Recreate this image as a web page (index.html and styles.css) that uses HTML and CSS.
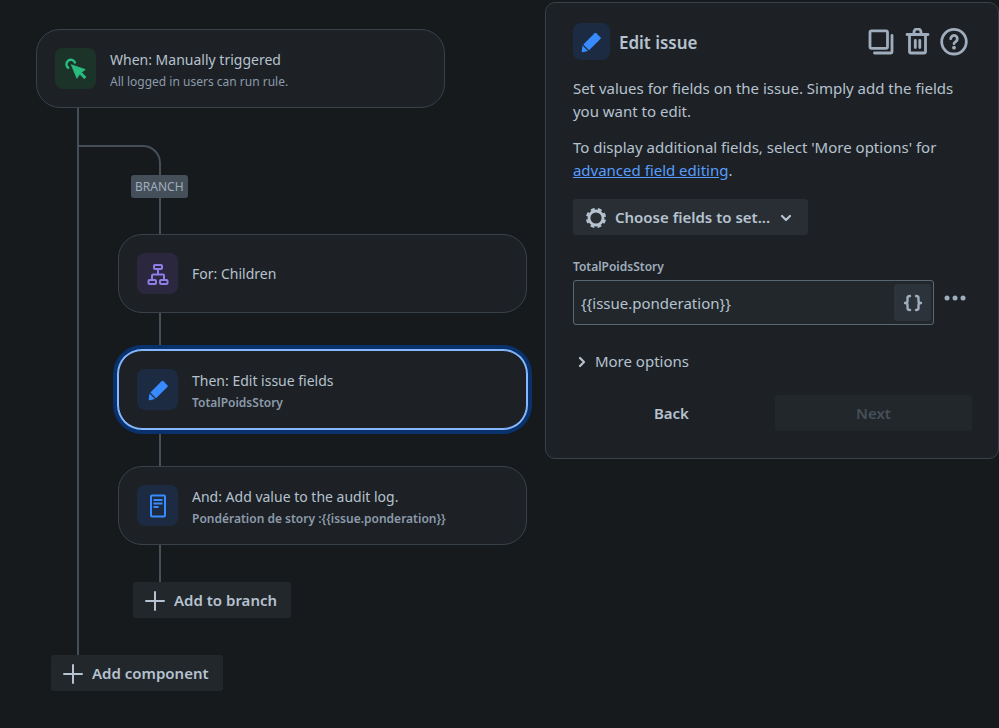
FILE: index.html
```html
<!DOCTYPE html>
<html lang="en">
<head>
    <meta charset="UTF-8">
    <meta name="viewport" content="width=device-width, initial-scale=1.0">
    <title>Automation rule</title>
    <link rel="stylesheet" href="styles.css">
</head>
<body>
    <div class="layout">
        <main class="rule">
            <div class="card">
                <span class="icon green">
                    <svg width="24" height="24" viewBox="0 0 24 24">
                        <path d="M4.200 10.700A4.400 4.400 0 1 1 10.900 5.500" fill="none" stroke="currentColor" stroke-width="2.400" stroke-linecap="round"/>
                        <path d="M7.300 7.700 21.300 12.600 17.500 15.300 22 19.900 20.200 21.700 15.700 17.100 12.900 21.300Z" fill="currentColor" stroke="currentColor" stroke-width="0.8" stroke-linejoin="round"/>
                    </svg>
                </span>
                <div class="card-text">
                    <p class="card-title">When: Manually triggered</p>
                    <p class="card-sub light">All logged in users can run rule.</p>
                </div>
            </div>

            <div class="trunk">
                <div class="elbow"></div>
                <div class="branch">
                    <span class="branch-label">BRANCH</span>
                    <div class="line"></div>
                    <div class="card">
                        <span class="icon purple">
                            <svg width="24" height="24" viewBox="0 0 24 24" fill="none" stroke="currentColor" stroke-width="2">
                                <rect x="8" y="3" width="8" height="4" rx="1"/>
                                <rect x="2.500" y="18" width="7.500" height="4" rx="1"/>
                                <rect x="14" y="18" width="7.500" height="4" rx="1"/>
                                <path d="M12 7v5.500M6 18v-4.500q0-1 1-1h10q1 0 1 1V18"/>
                            </svg>
                        </span>
                        <div class="card-text">
                            <p class="card-title">For: Children</p>
                        </div>
                    </div>
                    <div class="line"></div>
                    <div class="card selected">
                        <span class="icon blue">
                            <svg width="24" height="24" viewBox="0 0 24 24" fill="currentColor">
                                <path d="M15.600 3.200q.9-.8 1.800 0l4 4q.8.900 0 1.800L10 20.300 4.300 14.600Z"/>
                                <path d="M3.500 15.500 9 21l-5.200 1.300q-1.200.2-1.100-1Z"/>
                            </svg>
                        </span>
                        <div class="card-text">
                            <p class="card-title">Then: Edit issue fields</p>
                            <p class="card-sub">TotalPoidsStory</p>
                        </div>
                    </div>
                    <div class="line"></div>
                    <div class="card">
                        <span class="icon blue">
                            <svg width="24" height="24" viewBox="0 0 24 24" fill="none" stroke="currentColor" stroke-width="2">
                                <rect x="5" y="1.500" width="14" height="21" rx="1"/>
                                <path d="M7.500 6h9M7.500 9.500h9M7.500 13h5"/>
                            </svg>
                        </span>
                        <div class="card-text">
                            <p class="card-title">And: Add value to the audit log.</p>
                            <p class="card-sub">Pondération de story :{{issue.ponderation}}</p>
                        </div>
                    </div>
                    <div class="line"></div>
                    <button class="btn add" type="button">
                        <svg width="20" height="20" viewBox="0 0 20 20" stroke="currentColor" stroke-width="2" stroke-linecap="round"><path d="M10 1v18M1 10h18"/></svg>
                        Add to branch
                    </button>
                </div>
            </div>
            <button class="btn add" type="button">
                <svg width="20" height="20" viewBox="0 0 20 20" stroke="currentColor" stroke-width="2" stroke-linecap="round"><path d="M10 1v18M1 10h18"/></svg>
                Add component
            </button>
        </main>

        <aside class="panel">
            <header class="panel-head">
                <span class="icon small blue">
                    <svg width="24" height="24" viewBox="0 0 24 24" fill="currentColor">
                        <path d="M15.600 3.200q.9-.8 1.800 0l4 4q.8.900 0 1.800L10 20.300 4.300 14.600Z"/>
                        <path d="M3.500 15.500 9 21l-5.200 1.300q-1.200.2-1.100-1Z"/>
                    </svg>
                </span>
                <h1>Edit issue</h1>
                <div class="actions">
                    <button type="button" aria-label="Duplicate">
                        <svg width="28" height="28" viewBox="0 0 28 28" fill="none" stroke="currentColor" stroke-width="2.800" stroke-linecap="round" stroke-linejoin="round">
                            <rect x="4" y="2.800" width="17.500" height="17.500" rx="1.500"/>
                            <path d="M26 7.500v16q0 1.500-1.500 1.500H8.500"/>
                        </svg>
                    </button>
                    <button type="button" aria-label="Delete">
                        <svg width="28" height="28" viewBox="0 0 28 28" fill="none" stroke="currentColor" stroke-width="2.800" stroke-linecap="round" stroke-linejoin="round">
                            <path d="M4 6.500h21M11 5.500V4a3.500 3.200 0 0 1 7 0v1.500M6.500 7.500v16q0 1.500 1.500 1.500h13q1.500 0 1.500-1.500v-16M12.300 12.500v7M16.800 12.500v7"/>
                        </svg>
                    </button>
                    <button type="button" aria-label="Help">
                        <svg width="28" height="28" viewBox="0 0 28 28" fill="none" stroke="currentColor" stroke-width="2.800" stroke-linecap="round">
                            <circle cx="14" cy="13.700" r="12.300"/>
                            <path d="M10.700 10.700a3.300 3.300 0 1 1 5.300 2.700q-2 1.300-2 2.300"/>
                            <circle cx="14" cy="19.700" r="1.900" fill="currentColor" stroke="none"/>
                        </svg>
                    </button>
                </div>
            </header>

            <p>Set values for fields on the issue. Simply add the fields you want to edit.</p>
            <p>To display additional fields, select 'More options' for <a href="#">advanced field editing</a>.</p>

            <button class="btn choose" type="button" aria-haspopup="listbox">
                <svg width="22" height="22" viewBox="0 0 22 22" fill="none" stroke="currentColor">
                    <circle cx="11" cy="11" r="7" stroke-width="2.800"/>
                    <circle cx="11" cy="11" r="9" stroke-width="2.200" stroke-dasharray="3.900 3.169" stroke-dashoffset="-1.584"/>
                </svg>
                Choose fields to set...
                <svg class="chevron" width="12" height="12" viewBox="0 0 12 12" fill="none" stroke="currentColor" stroke-width="2.200" stroke-linecap="round" stroke-linejoin="round"><path d="M2 4l4 4 4-4"/></svg>
            </button>

            <label for="totalPoids">TotalPoidsStory</label>
            <div class="field-row">
                <div class="field">
                    <input type="text" id="totalPoids" value="{{issue.ponderation}}" autocomplete="off">
                    <button class="smart" type="button" aria-label="Insert smart value">
                        <svg width="20" height="20" viewBox="0 0 20 20" fill="none" stroke="currentColor" stroke-width="2.400" stroke-linecap="round" stroke-linejoin="round">
                            <path d="M7 3Q4.500 3 4.500 5v3q0 2-2.500 2 2.500 0 2.500 2v3q0 2 2.500 2M13 3q2.500 0 2.500 2v3q0 2 2.500 2-2.500 0-2.500 2v3q0 2-2.500 2"/>
                        </svg>
                    </button>
                </div>
                <button class="more" type="button" aria-label="Field actions">
                    <svg width="22" height="6" viewBox="0 0 22 6" fill="currentColor"><circle cx="3" cy="3" r="2.500"/><circle cx="11" cy="3" r="2.500"/><circle cx="19" cy="3" r="2.500"/></svg>
                </button>
            </div>

            <details>
                <summary>
                    <svg width="12" height="12" viewBox="0 0 12 12" fill="none" stroke="currentColor" stroke-width="2.200" stroke-linecap="round" stroke-linejoin="round"><path d="M4 2l4 4-4 4"/></svg>
                    More options
                </summary>
            </details>

            <footer class="panel-foot">
                <button class="btn back" type="button">Back</button>
                <button class="btn next" type="button" disabled>Next</button>
            </footer>
        </aside>
    </div>
</body>
</html>
```
FILE: styles.css
```css
:root {
    --bg: #161a1d;
    --surface: #1d2125;
    --border: #38414a;
    --line: #454f59;
    --text: #b6c2cf;
    --subtle: #8c9bab;
    --icon: #9fadbc;
    --blue: #388bff;
}
* { box-sizing: border-box; margin: 0; padding: 0; }
body {
    font-family: 'Noto Sans', 'Open Sans', sans-serif;
    font-size: 15px; line-height: 23px;
    background: var(--bg); color: var(--text);
}
svg { display: block; flex: none; }
button, input { font: inherit; color: inherit; border: none; background: none; }
button { cursor: pointer; }

.layout {
    display: grid; grid-template-columns: 6fr 5fr;
    align-items: start; min-height: 100vh;
}

/* rule chain */
.rule { padding: 29px 18px 36px 36px; }
.card {
    display: flex; align-items: center; gap: 14px;
    min-height: 79px; padding: 0 18px;
    background: var(--surface); border: 1px solid var(--border);
    border-radius: 24px;
}
.rule > .card { margin-right: 82px; }
.card.selected {
    position: relative;
    border-color: #85b8ff;
    box-shadow: 0 0 0 1px #85b8ff, 0 0 0 5px #09326c;
}
.card-title { font-size: 14px; line-height: 22px; }
.card-title:not(:last-child) { padding-top: 4px; }
.card-sub { padding-top: 1px; font-size: 12px; line-height: 20px; font-weight: 600; color: var(--subtle); }
.card-sub.light { font-weight: 400; }

.icon {
    display: flex; align-items: center; justify-content: center;
    flex: none; width: 41px; height: 41px; border-radius: 8px;
}
.icon.small { width: 37px; height: 37px; }
.green { background: #1c3329; color: #2abb7f; }
.purple { background: #2b273f; color: #8f7ee7; }
.blue { background: #1c2b41; color: var(--blue); }

.trunk {
    margin-left: 41px; padding: 37px 0;
    border-left: 2px solid var(--line);
}
.elbow {
    width: 82px; height: 30px;
    border: solid var(--line); border-width: 2px 2px 0 0;
    border-top-right-radius: 18px;
}
.branch { margin-left: 39px; }
.line { width: 2px; height: 37px; margin-left: 41px; background: var(--line); }
.branch-label {
    display: block; width: fit-content; margin-left: 13px; padding: 1px 4px 0;
    font-size: 12px; line-height: 22px; color: var(--icon);
    background: var(--line); border-radius: 3px;
}
.branch-label + .line { height: 36px; }

.btn {
    display: flex; align-items: center; justify-content: center;
    min-height: 36px; padding: 1px 12px 0;
    font-weight: 600; background: #22272b; border-radius: 3px;
}
.add { gap: 9px; margin-left: 15px; padding-right: 14px; }

/* settings panel */
.panel {
    margin-top: 2px; padding: 20px 26px 27px 27px;
    background: var(--surface); border: 1px solid var(--border);
    border-radius: 10px;
}
.panel-head { display: flex; align-items: center; gap: 9px; margin-bottom: 17px; }
.panel-head h1 { padding-top: 2px; font-size: 17px; font-weight: 600; }
.actions { display: flex; gap: 9px; margin-left: auto; margin-right: 4px; color: var(--icon); }
.panel p { margin-bottom: 13px; }
.panel a { color: #579dff; text-decoration: underline; }
.choose { gap: 8px; margin-top: 17px; background: #282e33; }
.chevron { margin: 0 4px 0 2px; }

.panel label {
    display: block; margin: 22px 0 3px;
    font-size: 12px; line-height: 20px; font-weight: 600; color: var(--icon);
}
.field-row { display: flex; align-items: flex-start; gap: 10px; }
.field {
    display: flex; align-items: center; flex: 1; min-width: 0;
    min-height: 45px; padding: 0 2px 0 7px;
    background: #22272b; border: 1px solid #596773; border-radius: 3px;
}
.field input { flex: 1; min-width: 0; padding-top: 2px; outline: none; }
.smart {
    display: flex; align-items: center; justify-content: center;
    width: 37px; height: 37px; background: #2c333a; border-radius: 3px;
    color: var(--icon);
}
.more { padding: 15px 6px 15px 0; color: var(--icon); }

details { margin-top: 25px; }
summary { display: flex; align-items: center; gap: 7px; padding-left: 3px; list-style: none; cursor: pointer; }

.panel-foot { display: grid; grid-template-columns: 1fr 1fr; gap: 5px; margin-top: 22px; }
.back { background: none; }
.next { color: #454f59; cursor: default; }
```
